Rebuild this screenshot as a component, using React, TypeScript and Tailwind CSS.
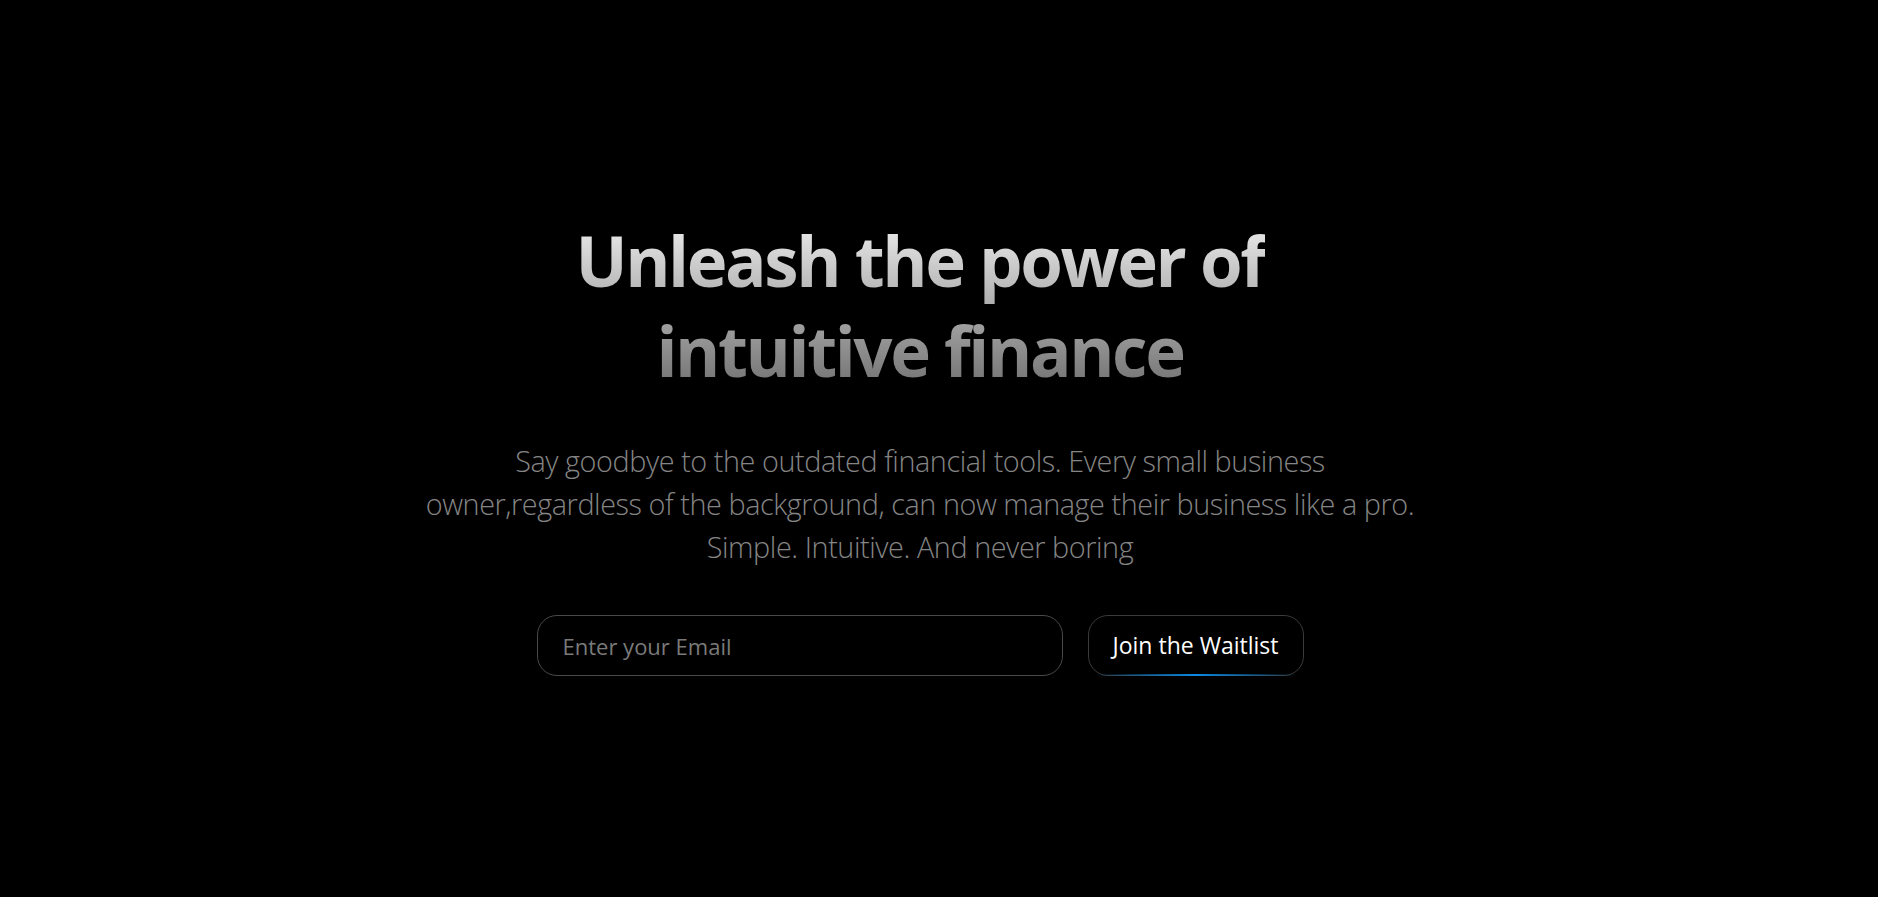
import React from "react";

export default function App() {
  return (
    <div className="min-h-screen w-full bg-black" style={{ fontFamily: "'Open Sans', 'Noto Sans', sans-serif" }}>
      <div className="flex flex-col items-center pt-[215px] pr-[38px]">
        <h1 className="text-center text-[69px] font-bold leading-[90px] tracking-[-0.035em] bg-gradient-to-b from-[#f2f2f2] to-[#6e6e6e] bg-clip-text text-transparent">
          Unleash the power of
          <br />
          intuitive finance
        </h1>
        <p className="mt-[44px] text-center text-[28.8px] font-light leading-[43px] text-[#858585] tracking-[-0.015em]">
          Say goodbye to the outdated financial tools. Every small business
          <br />
          owner,regardless of the background, can now manage their business like a pro.
          <br />
          Simple. Intuitive. And never boring
        </p>
        <div className="mt-[47px] flex items-center gap-[25px]">
          <input
            type="email"
            placeholder="Enter your Email"
            className="h-[61px] w-[526px] rounded-[20px] border border-[#4a4a4a] bg-black px-[25px] text-[22px] text-white outline-none placeholder:text-[#7a7a7a]"
          />
          <button className="relative h-[61px] w-[216px] rounded-[20px] border border-[#3a3a3a] bg-black text-[23px] text-white">
            Join the Waitlist
            <span className="pointer-events-none absolute bottom-[-1px] left-[6px] right-[6px] h-[2px] bg-gradient-to-r from-transparent via-[#0b8ae6] to-transparent" />
          </button>
        </div>
      </div>
    </div>
  );
}
